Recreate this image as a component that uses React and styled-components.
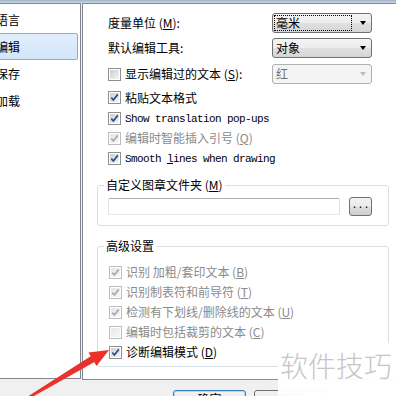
import React from 'react';
import styled, { createGlobalStyle } from 'styled-components';

const GlobalStyle = createGlobalStyle`
  html, body { margin: 0; padding: 0; }
  body {
    width: 396px;
    height: 396px;
    overflow: hidden;
    background: #f0f0f0;
    font-family: "Noto Sans CJK SC", "Noto Sans", sans-serif;
    font-size: 12px;
    color: #000;
  }
`;

// WINDOW FRAME
const Window = styled.div`
  position: relative;
  width: 396px;
  height: 396px;
  overflow: hidden;
  display: flex;
  flex-direction: column;
  background: #f0f0f0;
`;
const TopFrame = styled.div`
  height: 3px;
  flex-shrink: 0;
  background: linear-gradient(#9fb2c8, #cad7e5);
`;
const Main = styled.div`
  display: flex;
  gap: 1px;
  height: 377px;
  flex-shrink: 0;
`;

// LEFT LIST
const NavList = styled.ul`
  list-style: none;
  margin: 0;
  padding: 2px 0 0;
  width: 81px;
  height: 376px;
  box-sizing: border-box;
  background: #fff;
  border-top: 1px solid #828790;
  border-right: 1px solid #828790;
  border-bottom: 1px solid #828790;
  overflow: hidden;
`;
const NavItem = styled.li`
  height: 27px;
  width: 84px;
  margin-left: -6px;
  padding-left: 1px;
  box-sizing: border-box;
  display: flex;
  align-items: center;
  line-height: 14px;
  border-radius: 2px;
  border: 1px solid ${p => (p.$selected ? '#84acdd' : 'transparent')};
  background: ${p => (p.$selected ? 'linear-gradient(#e2eefc, #d3e6fa)' : 'transparent')};
`;

// RIGHT PANEL
const Panel = styled.div`
  flex: 1;
  height: 377px;
  box-sizing: border-box;
  background: #fff;
  border-top: 1px solid #828790;
  border-left: 1px solid #828790;
  border-bottom: 1px solid #8b8e96;
  padding-left: 14px;
  display: flex;
  flex-direction: column;
`;
const FieldRow = styled.div`
  display: flex;
  align-items: center;
  width: 275px;
  height: 20px;
  box-sizing: border-box;
  padding-left: 11px;
  margin-top: ${p => p.$mt || 0}px;
  line-height: 14px;
`;
const CheckRow = styled.div`
  display: flex;
  align-items: center;
  height: ${p => p.$h || 20}px;
  margin-top: ${p => p.$mt || 0}px;
  padding-left: 11px;
  line-height: 14px;
  white-space: nowrap;
  color: ${p => (p.$disabled ? '#8a8a8a' : '#000')};
`;
const Box = styled.span`
  width: 13px;
  height: 13px;
  box-sizing: border-box;
  flex-shrink: 0;
  margin-right: 4px;
  padding: 1px;
  border: 1px solid ${p => (p.$disabled ? '#bdbdbd' : '#8e8f8f')};
  background: #fff;
`;
const BoxInner = styled.span`
  display: flex;
  align-items: center;
  justify-content: center;
  width: 9px;
  height: 9px;
  background: ${p => (p.$disabled
    ? 'linear-gradient(135deg, #e6e6e6, #f8f8f8)'
    : 'linear-gradient(135deg, #cdd0d4, #f4f4f5)')};
`;
const Mono = styled.span`
  font-family: "Liberation Mono", "DejaVu Sans Mono", monospace;
  font-size: 11px;
  letter-spacing: -0.6px;
`;

// COMBO BOX
const Combo = styled.div`
  margin-left: auto;
  width: 100px;
  height: 20px;
  box-sizing: border-box;
  display: flex;
  align-items: center;
  padding: 0 5px 0 2px;
  border-radius: 3px;
  border: 1px solid ${p => (p.$disabled ? '#adb2b5' : '#707070')};
  background: ${p => (p.$disabled
    ? '#f4f4f4'
    : 'linear-gradient(#f4f4f4, #ececec 50%, #e0e0e0 51%, #d6d6d6)')};
  color: ${p => (p.$disabled ? '#6d6d6d' : '#000')};
`;
const ComboText = styled.span`
  flex: 1;
  height: 14px;
  line-height: 14px;
  padding-left: 1px;
  margin-right: 9px;
  outline: ${p => (p.$focus ? '1px dotted #000' : 'none')};
`;
const Arrow = styled.span`
  width: 0;
  height: 0;
  border-left: 3.5px solid transparent;
  border-right: 3.5px solid transparent;
  border-top: 4px solid ${p => (p.$disabled ? '#bcbcbc' : '#000')};
`;

// GROUP BOXES
const Group = styled.fieldset`
  margin: ${p => p.$mt || 0}px 0 0;
  width: 292px;
  box-sizing: border-box;
  padding: 0 0 ${p => p.$pb || 0}px;
  border: 1px solid #d5dfe5;
  border-radius: 3px;
  min-inline-size: 0;
`;
const Legend = styled.legend`
  margin-left: 6px;
  padding: 0 2px;
  height: 16px;
  line-height: 16px;
`;
const PathRow = styled.div`
  display: flex;
  align-items: center;
  height: 19px;
  margin-top: 4px;
  padding-left: 10px;
`;
const PathInput = styled.div`
  width: 232px;
  height: 17px;
  box-sizing: border-box;
  border: 1px solid #abadb3;
  border-top-color: #abadb3;
  border-left-color: #e2e3ea;
  border-right-color: #dbdfe6;
  border-bottom-color: #e3e9ef;
  border-radius: 2px;
  background: #fff;
`;
const SmallButton = styled.div`
  margin-left: 9px;
  width: 23px;
  height: 19px;
  box-sizing: border-box;
  border: 1px solid #707070;
  border-radius: 3px;
  background: linear-gradient(#f2f2f2, #ebebeb 50%, #dddddd 51%, #cfcfcf);
  font-family: "Liberation Mono", monospace;
  font-size: 10px;
  line-height: 16px;
  text-align: center;
  letter-spacing: 0px;
`;
const GroupRows = styled.div`
  margin-top: 8px;
`;

// BOTTOM BAR
const ButtonBar = styled.div`
  display: flex;
  gap: 8px;
  padding: 10px 0 0 173px;
`;
const DialogButton = styled.div`
  width: 73px;
  height: 23px;
  box-sizing: border-box;
  flex-shrink: 0;
  border-radius: 3px;
  border: 1px solid ${p => (p.$default ? '#3c7fb1' : '#707070')};
  box-shadow: ${p => (p.$default ? 'inset 0 0 0 1px #a9dcf6' : 'none')};
  background: linear-gradient(#f2f2f2, #ebebeb 50%, #dddddd 51%, #cfcfcf);
  text-align: center;
  line-height: 14px;
  padding-top: 1px;
`;

// OVERLAYS
const Watermark = styled.div`
  position: absolute;
  left: 278px;
  top: 343px;
  right: 0;
  bottom: 0;
  background: rgba(255, 255, 255, 0.96);
  padding: 8px 0 0 2px;
  font-size: 28px;
  line-height: 28px;
  color: #c6c6c6;
  font-weight: 300;
  white-space: nowrap;
`;
const ArrowLayer = styled.svg`
  position: absolute;
  left: 0;
  top: 0;
  pointer-events: none;
`;

const Checkbox = ({ checked, disabled, children, ...rest }) => (
  <CheckRow $disabled={disabled} {...rest}>
    <Box $disabled={disabled}>
      <BoxInner $disabled={disabled}>
        {checked && (
          <svg width="9" height="9" viewBox="0 0 9 9">
            <path
              d="M1.3 4.6 L3.4 7 L7.8 1.4"
              fill="none"
              stroke={disabled ? '#a9a9a9' : '#2b4c8c'}
              strokeWidth="1.7"
            />
          </svg>
        )}
      </BoxInner>
    </Box>
    <span>{children}</span>
  </CheckRow>
);

const App = () => {
  return (
    <Window>
      <GlobalStyle />
      <TopFrame />
      <Main>
        <NavList>
          <NavItem>语言</NavItem>
          <NavItem $selected>编辑</NavItem>
          <NavItem>保存</NavItem>
          <NavItem>加载</NavItem>
        </NavList>

        <Panel>
          <FieldRow $mt={9}>
            <span>度量单位 (<u>M</u>):</span>
            <Combo>
              <ComboText $focus>毫米</ComboText>
              <Arrow />
            </Combo>
          </FieldRow>
          <FieldRow $mt={5}>
            <span>默认编辑工具:</span>
            <Combo>
              <ComboText>对象</ComboText>
              <Arrow />
            </Combo>
          </FieldRow>
          <FieldRow $mt={6}>
            <Checkbox style={{ paddingLeft: 0 }}>显示编辑过的文本 (<u>S</u>):</Checkbox>
            <Combo $disabled>
              <ComboText>红</ComboText>
              <Arrow $disabled />
            </Combo>
          </FieldRow>

          <Checkbox checked $mt={3} $h={21}>粘贴文本格式</Checkbox>
          <Checkbox checked><Mono>Show translation pop-ups</Mono></Checkbox>
          <Checkbox checked disabled>编辑时智能插入引号 (<u>Q</u>)</Checkbox>
          <Checkbox checked><Mono>Smooth <u>l</u>ines when drawing</Mono></Checkbox>

          <Group $mt={9} $pb={9}>
            <Legend>自定义图章文件夹 (<u>M</u>)</Legend>
            <PathRow>
              <PathInput />
              <SmallButton>...</SmallButton>
            </PathRow>
          </Group>

          <Group $mt={12} $pb={4}>
            <Legend>高级设置</Legend>
            <GroupRows>
              <Checkbox checked disabled>识别 加粗/套印文本 (<u>B</u>)</Checkbox>
              <Checkbox checked disabled>识别制表符和前导符 (<u>T</u>)</Checkbox>
              <Checkbox checked disabled>检测有下划线/删除线的文本 (<u>U</u>)</Checkbox>
              <Checkbox disabled>编辑时包括裁剪的文本 (<u>C</u>)</Checkbox>
              <Checkbox checked>诊断编辑模式 (<u>D</u>)</Checkbox>
            </GroupRows>
          </Group>
        </Panel>
      </Main>

      <ButtonBar>
        <DialogButton $default>确定</DialogButton>
        <DialogButton>取消</DialogButton>
      </ButtonBar>

      <Watermark>软件技巧</Watermark>

      <ArrowLayer width="396" height="396" viewBox="0 0 396 396">
        <polygon points="27,397 29.5,398.5 94.5,362 91,356" fill="#e8322b" />
        <polygon points="109,350 88.5,352.5 96.5,366" fill="#e8322b" />
      </ArrowLayer>
    </Window>
  );
};

export default App;
